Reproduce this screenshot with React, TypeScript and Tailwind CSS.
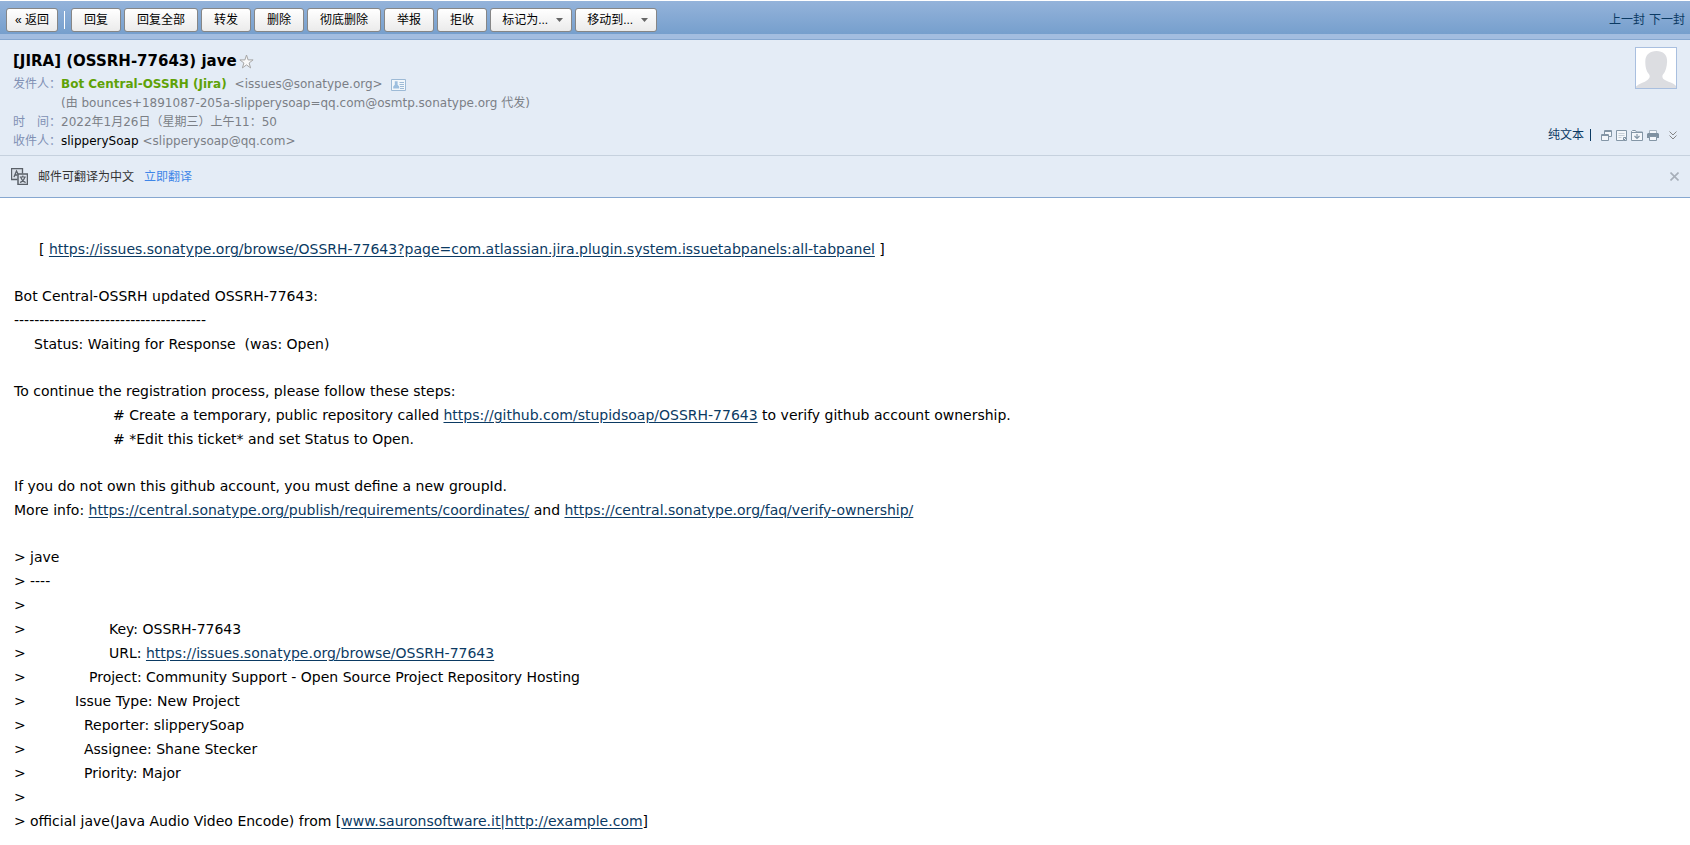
import React from "react";

type LinkProps = { href: string; children: React.ReactNode };

const toolbarButton =
  "flex h-6 cursor-pointer items-center whitespace-nowrap rounded-[3px] border border-[#868686] bg-linear-to-b from-white to-[#ebebeb] text-xs text-black";

function BodyLink({ href, children }: LinkProps) {
  return (
    <a href={href} className="text-[#0b3a63] underline underline-offset-2">
      {children}
    </a>
  );
}

function ToolButton({ children }: { children: React.ReactNode }) {
  return <button type="button" className={`${toolbarButton} px-3`}>{children}</button>;
}

function MenuButton({ children }: { children: React.ReactNode }) {
  return (
    <button type="button" aria-haspopup="menu" className={`${toolbarButton} gap-2 pl-[11px] pr-2`}>
      {children}
      <svg width="7" height="4" viewBox="0 0 7 4" aria-hidden="true">
        <path d="M0 0h7L3.5 4z" fill="#666" />
      </svg>
    </button>
  );
}

function StarIcon() {
  return (
    <svg width="15" height="15" viewBox="0 0 15 15" aria-hidden="true">
      <path
        d="M7.5 1l1.600 4.900h5l-4 3.100 1.500 4.900-4.100-3-4.100 3 1.500-4.900-4-3.100h5z"
        fill="#f8f8f8"
        stroke="#a6a6a6"
        strokeWidth="1"
      />
    </svg>
  );
}

function CardIcon() {
  return (
    <svg width="15" height="12" viewBox="0 0 15 12" aria-hidden="true">
      <path d="M.5.5h14v11H.5z" fill="#f2f7fb" stroke="#9dbad6" />
      <path d="M3.800 2.200h2.800v3.600l1.600 1.700v2H2.200v-2l1.600-1.700z" fill="#9dbfdf" />
      <path d="M8.500 3.500H13M8.500 5.500H13M9 7.500h4M9 9.500h4" stroke="#9dbad6" />
    </svg>
  );
}

function TranslateIcon() {
  return (
    <svg width="17" height="17" viewBox="0 0 17 17" fill="none" stroke="#5a6068" aria-hidden="true">
      <path d="M6.500 11.500h-6V.5h11v5" fill="#d9dfe8" strokeWidth="1.300" />
      <path d="M3 9l2.500-6L7 6M4 7h2.500" strokeWidth="1.300" />
      <path d="M7 6h9.500v10.500H7z" fill="#dfe5ee" strokeWidth="1.500" />
      <path d="M8.800 9h6M11.800 7.500V9M13.800 9.300c-.7 2.400-2.200 4.200-4.800 5.200M9.800 9.300c.7 2.400 2.300 4.200 4.900 5.200" strokeWidth="1.200" />
    </svg>
  );
}

function Avatar() {
  return (
    <svg width="40" height="40" viewBox="0 0 40 40" aria-hidden="true">
      <path
        d="M20.500 3c6.500 0 11 4 10.600 10.500-.2 5-1.300 10-4.100 13-1.300 1.500-.6 4 1.500 5.300C32 34 38 35 40 38v2H0v-1.500c3-3 8.500-4 11.500-6.500 1.800-1.500 3-3.500 1.700-5.500C10 23 9.300 18 9.300 13.500 9.300 6.500 14 3 20.500 3z"
        fill="#dcdde1"
      />
    </svg>
  );
}

function WindowIcon() {
  return (
    <svg width="11" height="11" viewBox="0 0 11 11" fill="none" stroke="#8496a6" aria-hidden="true">
      <path d="M3.500 4V.5h7v6H8" fill="#f4f7fb" />
      <path d="M3 1.500h8" />
      <path d="M.5 4.500h7v6h-7z" fill="#f4f7fb" />
      <path d="M0 5.500h8" />
    </svg>
  );
}

function NoteIcon() {
  return (
    <svg width="11" height="11" viewBox="0 0 11 11" fill="none" stroke="#8496a6" aria-hidden="true">
      <path d="M.5.5h10v7l-3 3h-7z" fill="#f4f7fb" />
      <path d="M10.500 7.500h-3v3M10.500 8v2.500H8" />
      <path d="M2.500 3.500h6M2.500 5.500h6M2.500 7.500h3" stroke="#c5ced6" />
    </svg>
  );
}

function FolderIcon() {
  return (
    <svg width="12" height="11" viewBox="0 0 12 11" fill="none" stroke="#8496a6" aria-hidden="true">
      <path d="M.5 10.500v-9l1-1h3l1 1.500h6v8.500z" fill="#f4f7fb" />
      <path d="M0 2.500h12" />
      <path d="M6 4v4.500M3.500 6L6 8.500 8.500 6" strokeWidth="1.200" />
    </svg>
  );
}

function PrintIcon() {
  return (
    <svg width="12" height="11" viewBox="0 0 12 11" aria-hidden="true">
      <path d="M2.500.5h7v3h-7z" fill="#f4f7fb" stroke="#a9b6c2" />
      <path d="M1 3h10l1 1v4H0V4z" fill="#7f91a1" />
      <path d="M2.500 6.500h7v4h-7z" fill="#f4f7fb" stroke="#8496a6" />
    </svg>
  );
}

function ExpandIcon() {
  return (
    <svg width="8" height="9" viewBox="0 0 8 9" fill="none" stroke="#858585" aria-hidden="true">
      <path d="M.5.5L4 4 7.500.5M.5 4.500L4 8l3.500-3.500" />
    </svg>
  );
}

const iconButton = "flex cursor-pointer";

function Meta({ label, children }: { label: string; children: React.ReactNode }) {
  return (
    <div className="flex h-[19px] items-center text-xs leading-[19px] text-[#7b7f86]">
      <dt className="w-12 shrink-0 whitespace-pre text-[#8090b4]">{label}</dt>
      <dd className="flex items-center">{children}</dd>
    </div>
  );
}

function Quote({ indent = "pl-1", children }: { indent?: string; children?: React.ReactNode }) {
  return (
    <div className="flex">
      <span className="w-3">&gt;</span>
      <span className={indent}>{children}</span>
    </div>
  );
}

export default function App() {
  return (
    <div className="min-h-screen bg-white pt-px font-['DejaVu_Sans','Noto_Sans_CJK_SC',sans-serif]">
      <nav className="flex h-[33px] items-center justify-between bg-linear-to-b from-[#94b3da] to-[#769fcd] pl-[6px] pr-[5px] pt-[6px] pb-px font-['Liberation_Sans','Noto_Sans_CJK_SC',sans-serif]">
        <div className="flex items-center gap-[3px]">
          <button type="button" className={`${toolbarButton} px-2`}>« 返回</button>
          <span className="mx-[3px] h-[18px] w-px bg-white" />
          <ToolButton>回复</ToolButton>
          <ToolButton>回复全部</ToolButton>
          <ToolButton>转发</ToolButton>
          <ToolButton>删除</ToolButton>
          <ToolButton>彻底删除</ToolButton>
          <ToolButton>举报</ToolButton>
          <ToolButton>拒收</ToolButton>
          <MenuButton>标记为...</MenuButton>
          <MenuButton>移动到...</MenuButton>
        </div>
        <div className="flex gap-1 text-xs text-[#0b3a63]">
          <a href="#prev">上一封</a>
          <a href="#next">下一封</a>
        </div>
      </nav>
      <div className="h-[6px] border-b border-[#86a7d0] bg-[#a3bde0]" />

      <header className="flex justify-between border-b border-[#c6d1de] bg-[#e4ecf6] pl-[13px] pr-[13px] pt-[7px]">
        <div className="pb-1 pt-[3px]">
          <h1 className="flex h-[22px] items-center gap-[2px] text-[15px] font-bold text-black">
            [JIRA] (OSSRH-77643) jave
            <button type="button" aria-label="星标" className={iconButton}><StarIcon /></button>
          </h1>
          <dl className="pt-[3px]">
            <Meta label="发件人：">
              <b className="text-[#5fa207]">Bot Central-OSSRH (Jira)</b>
              <span className="pl-2">&lt;issues@sonatype.org&gt;</span>
              <button type="button" aria-label="联系人" className="ml-2 flex cursor-pointer"><CardIcon /></button>
            </Meta>
            <Meta label="">(由 bounces+1891087-205a-slipperysoap=qq.com@osmtp.sonatype.org 代发)</Meta>
            <Meta label="时　间：">2022年1月26日（星期三）上午11：50</Meta>
            <Meta label="收件人：">
              <span className="text-black">slipperySoap</span>
              <span className="pl-1">&lt;slipperysoap@qq.com&gt;</span>
            </Meta>
          </dl>
        </div>
        <div className="flex flex-col items-end justify-between pb-3">
          <div className="border border-[#a9bfdf] bg-white">
            <Avatar />
          </div>
          <div className="flex items-center text-xs leading-4 text-[#0b3a63]">
            <a href="#text">纯文本</a>
            <span className="ml-[6px] mr-[10px] h-3 w-px bg-[#0b3a63]" />
            <div className="flex items-center gap-1">
              <button type="button" aria-label="新窗口" className={iconButton}><WindowIcon /></button>
              <button type="button" aria-label="便签" className={iconButton}><NoteIcon /></button>
              <button type="button" aria-label="保存" className={iconButton}><FolderIcon /></button>
              <button type="button" aria-label="打印" className={iconButton}><PrintIcon /></button>
            </div>
            <button type="button" aria-label="展开" className="ml-[10px] flex cursor-pointer"><ExpandIcon /></button>
          </div>
        </div>
      </header>

      <div className="flex h-[42px] items-center justify-between border-b border-[#86a7d0] bg-[#e4ecf6] pl-[11px] pr-[11px] text-xs">
        <div className="flex items-center gap-[10px] text-[#333]">
          <TranslateIcon />
          邮件可翻译为中文
          <button type="button" className="cursor-pointer text-[#3f86e8]">立即翻译</button>
        </div>
        <button type="button" aria-label="关闭" className={iconButton}>
          <svg width="9" height="9" viewBox="0 0 9 9" fill="none" stroke="#a7afb9" strokeWidth="1.6" aria-hidden="true">
            <path d="M.5.5l8 8M8.500.5l-8 8" />
          </svg>
        </button>
      </div>

      <main className="flex flex-col gap-[23px] px-[14px] pt-[39px] text-sm leading-6 text-black">
        <p className="pl-[25px]">
          [ <BodyLink href="https://issues.sonatype.org/browse/OSSRH-77643?page=com.atlassian.jira.plugin.system.issuetabpanels:all-tabpanel">https://issues.sonatype.org/browse/OSSRH-77643?page=com.atlassian.jira.plugin.system.issuetabpanels:all-tabpanel</BodyLink> ]
        </p>
        <div>
          <p>Bot Central-OSSRH updated OSSRH-77643:</p>
          <p>--------------------------------------</p>
          <p className="pl-5">Status: Waiting for Response&nbsp; (was: Open)</p>
        </div>
        <div>
          <p>To continue the registration process, please follow these steps:</p>
          <p className="pl-[99px]">
            # Create a temporary, public repository called <BodyLink href="https://github.com/stupidsoap/OSSRH-77643">https://github.com/stupidsoap/OSSRH-77643</BodyLink> to verify github account ownership.
          </p>
          <p className="pl-[99px]"># *Edit this ticket* and set Status to Open.</p>
        </div>
        <div>
          <p>If you do not own this github account, you must define a new groupId.</p>
          <p>
            More info: <BodyLink href="https://central.sonatype.org/publish/requirements/coordinates/">https://central.sonatype.org/publish/requirements/coordinates/</BodyLink> and <BodyLink href="https://central.sonatype.org/faq/verify-ownership/">https://central.sonatype.org/faq/verify-ownership/</BodyLink>
          </p>
        </div>
        <div>
          <Quote>jave</Quote>
          <Quote>----</Quote>
          <Quote />
          <Quote indent="pl-[83px]">Key: OSSRH-77643</Quote>
          <Quote indent="pl-[83px]">
            URL: <BodyLink href="https://issues.sonatype.org/browse/OSSRH-77643">https://issues.sonatype.org/browse/OSSRH-77643</BodyLink>
          </Quote>
          <Quote indent="pl-[63px]">Project: Community Support - Open Source Project Repository Hosting</Quote>
          <Quote indent="pl-[49px]">Issue Type: New Project</Quote>
          <Quote indent="pl-[58px]">Reporter: slipperySoap</Quote>
          <Quote indent="pl-[58px]">Assignee: Shane Stecker</Quote>
          <Quote indent="pl-[58px]">Priority: Major</Quote>
          <Quote />
          <Quote>
            official jave(Java Audio Video Encode) from [<BodyLink href="http://www.sauronsoftware.it">www.sauronsoftware.it|http://example.com</BodyLink>]
          </Quote>
        </div>
      </main>
    </div>
  );
}
